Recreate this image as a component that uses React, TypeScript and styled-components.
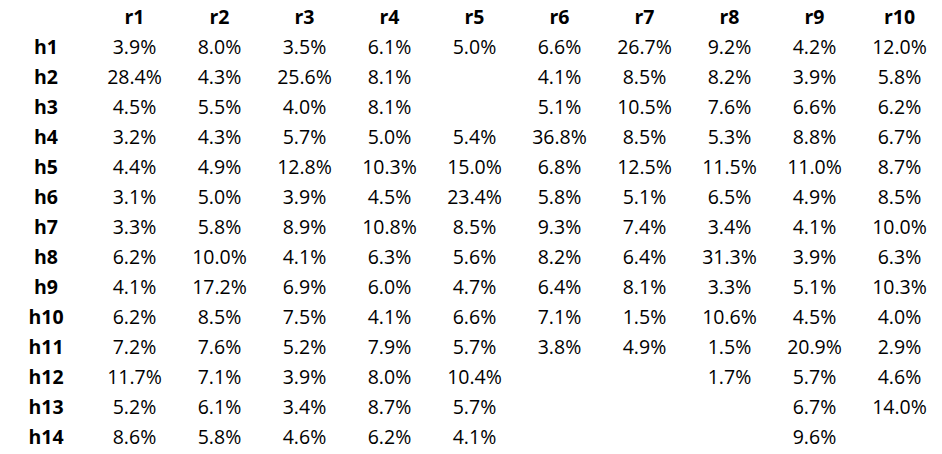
import React from "react";
import styled, { createGlobalStyle } from "styled-components";

const GlobalStyle = createGlobalStyle`
  html, body { margin: 0; padding: 0; background: #ffffff; }
  body { font-family: "Open Sans", "Liberation Sans", sans-serif; color: #000; }
`;

const Table = styled.div`
  display: grid;
  grid-template-columns: 92px repeat(10, 85px);
  grid-auto-rows: 30px;
  padding-top: 2px;
  width: 942px;
`;

const Cell = styled.div<{ $bold?: boolean }>`
  display: flex;
  align-items: center;
  justify-content: center;
  font-size: 19.5px;
  line-height: 30px;
  font-weight: ${(p) => (p.$bold ? 700 : 400)};
  white-space: nowrap;
`;

const cols = ["r1", "r2", "r3", "r4", "r5", "r6", "r7", "r8", "r9", "r10"];

const data: string[][] = [
  ["3.9", "8.0", "3.5", "6.1", "5.0", "6.6", "26.7", "9.2", "4.2", "12.0"],
  ["28.4", "4.3", "25.6", "8.1", "", "4.1", "8.5", "8.2", "3.9", "5.8"],
  ["4.5", "5.5", "4.0", "8.1", "", "5.1", "10.5", "7.6", "6.6", "6.2"],
  ["3.2", "4.3", "5.7", "5.0", "5.4", "36.8", "8.5", "5.3", "8.8", "6.7"],
  ["4.4", "4.9", "12.8", "10.3", "15.0", "6.8", "12.5", "11.5", "11.0", "8.7"],
  ["3.1", "5.0", "3.9", "4.5", "23.4", "5.8", "5.1", "6.5", "4.9", "8.5"],
  ["3.3", "5.8", "8.9", "10.8", "8.5", "9.3", "7.4", "3.4", "4.1", "10.0"],
  ["6.2", "10.0", "4.1", "6.3", "5.6", "8.2", "6.4", "31.3", "3.9", "6.3"],
  ["4.1", "17.2", "6.9", "6.0", "4.7", "6.4", "8.1", "3.3", "5.1", "10.3"],
  ["6.2", "8.5", "7.5", "4.1", "6.6", "7.1", "1.5", "10.6", "4.5", "4.0"],
  ["7.2", "7.6", "5.2", "7.9", "5.7", "3.8", "4.9", "1.5", "20.9", "2.9"],
  ["11.7", "7.1", "3.9", "8.0", "10.4", "", "", "1.7", "5.7", "4.6"],
  ["5.2", "6.1", "3.4", "8.7", "5.7", "", "", "", "6.7", "14.0"],
  ["8.6", "5.8", "4.6", "6.2", "4.1", "", "", "", "9.6", ""],
];

export default function App() {
  return (
    <>
      <GlobalStyle />
      <Table>
        <Cell />
        {cols.map((c) => (
          <Cell key={c} $bold>
            {c}
          </Cell>
        ))}
        {data.map((row, i) => (
          <React.Fragment key={i}>
            <Cell $bold>{`h${i + 1}`}</Cell>
            {row.map((v, j) => (
              <Cell key={j}>{v ? `${v}%` : ""}</Cell>
            ))}
          </React.Fragment>
        ))}
      </Table>
    </>
  );
}
